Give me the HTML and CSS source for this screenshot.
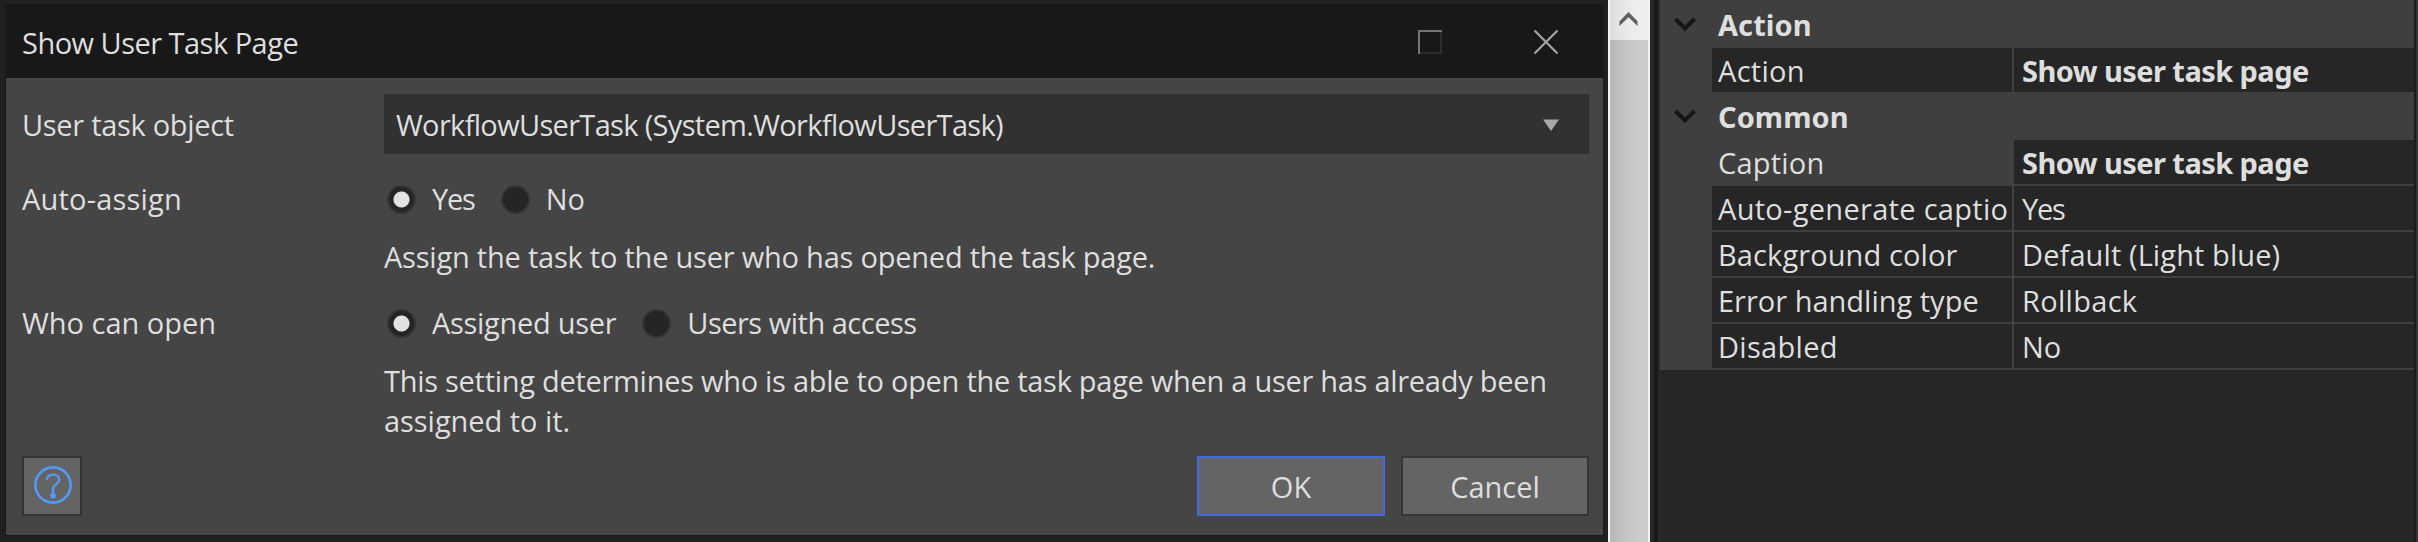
FILE: index.html
```html
<!DOCTYPE html>
<html lang="en">
<head>
<meta charset="utf-8">
<title>Show User Task Page</title>
<link rel="stylesheet" href="styles.css">
</head>
<body>
<main class="workspace">
  <section class="dialog">
    <header class="titlebar">
      <h1 class="title">Show User Task Page</h1>
      <svg class="icon-max" width="24" height="24" viewBox="0 0 24 24"><path d="M23 1V23H1" fill="none" stroke="#2c2c2c" stroke-width="2"/><path d="M1 24V1H24" fill="none" stroke="#757575" stroke-width="2"/></svg>
      <svg class="icon-close" width="24" height="24" viewBox="0 0 24 24"><path d="M0.5 0.5L23.5 23.5M23.5 0.5L0.5 23.5" fill="none" stroke="#a4a4a4" stroke-width="2.2"/></svg>
    </header>
    <div class="body">
      <div class="row row-select">
        <span class="label ls-object">User task object</span>
        <div class="select">
          <span class="ls-value">WorkflowUserTask (System.WorkflowUserTask)</span>
          <svg width="16" height="12" viewBox="0 0 16 12"><path d="M0 0.5H16L8 12Z" fill="#a8a8a8"/></svg>
        </div>
      </div>
      <div class="row row-assign">
        <span class="label ls-auto">Auto-assign</span>
        <div class="radios">
          <span class="radio checked"></span><span class="option ls-yes">Yes</span>
          <span class="radio"></span><span class="option">No</span>
        </div>
      </div>
      <p class="hint ls-assign">Assign the task to the user who has opened the task page.</p>
      <div class="row row-open">
        <span class="label">Who can open</span>
        <div class="radios">
          <span class="radio checked"></span><span class="option ls-assigned">Assigned user</span>
          <span class="radio"></span><span class="option ls-users">Users with access</span>
        </div>
      </div>
      <p class="hint ls-setting">This setting determines who is able to open the task page when a user has already been<br><span class="ls-tail">assigned to it.</span></p>
      <footer class="buttons">
        <button class="btn help" aria-label="Help">
          <svg width="40" height="40" viewBox="0 0 40 40" fill="none" stroke="#5599f7"><circle cx="20" cy="20" r="17.6" stroke-width="2.6"/><path d="M13.8 14.8C14.2 11 17 9.6 20 9.6C23.8 9.6 26.3 11.8 26.3 14.8C26.3 19 20 19.4 20 23.5V28" stroke-width="2.4"/><circle cx="20" cy="30.8" r="2.8" fill="#5599f7" stroke="none"/></svg>
        </button>
        <button class="btn ok">OK</button>
        <button class="btn">Cancel</button>
      </footer>
    </div>
  </section>
  <div class="scrollbar">
    <div class="scroll-up"><svg width="19" height="15" viewBox="0 0 19 15"><path d="M0.5 9.2L9.5 0L18.5 9.2V14L9.5 5.2L0.5 14Z" fill="#606060"/></svg></div>
    <div class="thumb"></div>
  </div>
  <div class="gutter"></div>
  <aside class="props">
    <div class="category"><svg width="22" height="15" viewBox="0 0 22 15"><path d="M1.5 2L11 11.5L20.5 2" fill="none" stroke="#161616" stroke-width="4"/></svg><b class="ls-heading">Action</b></div>
    <div class="prop last"><span class="name ls-action">Action</span><b class="value">Show user task page</b></div>
    <div class="category"><svg width="22" height="15" viewBox="0 0 22 15"><path d="M1.5 2L11 11.5L20.5 2" fill="none" stroke="#161616" stroke-width="4"/></svg><b class="ls-heading">Common</b></div>
    <div class="prop"><span class="name active ls-caption">Caption</span><b class="value">Show user task page</b></div>
    <div class="prop"><span class="name ls-wide">Auto-generate captio</span><span class="value ls-yes">Yes</span></div>
    <div class="prop"><span class="name ls-bg">Background color</span><span class="value ls-bg">Default (Light blue)</span></div>
    <div class="prop"><span class="name">Error handling type</span><span class="value ls-wide">Rollback</span></div>
    <div class="prop"><span class="name ls-wide">Disabled</span><span class="value">No</span></div>
  </aside>
  <div class="edge"></div>
</main>
</body>
</html>
```
FILE: styles.css
```css
* { box-sizing: border-box; }
body {
  margin: 0;
  background: #262626;
  color: #dedede;
  font: 29px/40px "Open Sans", "Noto Sans", sans-serif;
}
svg { display: block; flex: none; }
.workspace { display: flex; width: 2418px; height: 542px; overflow: hidden; }

/* Dialog */
.dialog {
  width: 1608px;
  padding: 4px 4px 7px 5px;
  background: #202020;
}
.titlebar {
  display: flex;
  align-items: center;
  height: 74px;
  padding: 0 46px 0 17px;
  background: #181818;
}
.title {
  flex: 1;
  margin: 0;
  padding-top: 4px;
  font-size: 29px;
  font-weight: 400;
  letter-spacing: -0.52px;
}
.icon-max, .icon-close { margin-top: 2px; }
.icon-max { margin-right: 92px; }
.body {
  height: 457px;
  margin: 0 1px;
  padding: 16px 14px 0 16px;
  background: #454545;
  box-shadow: 0 0 0 1px #191919;
}
.row { display: flex; }
.label { width: 362px; }
.row-select { align-items: center; height: 60px; }
.row-select .label { padding-top: 2px; }
.select {
  display: flex;
  flex: 1;
  align-items: center;
  justify-content: space-between;
  height: 60px;
  padding: 2px 30px 0 12px;
  background: #313131;
}
.row-assign { margin-top: 25px; }
.row-open { margin-top: 26px; }
.radios { display: flex; align-items: center; padding-left: 3px; }
.radio {
  width: 29px;
  height: 29px;
  margin-right: 16px;
  border: 2px solid #353535;
  border-radius: 50%;
  background: #252525;
}
.radio.checked { background: radial-gradient(circle, #e2e2e2 7.5px, #252525 8.5px); }
.option { margin-right: 26px; }
.hint { margin: 18px 0 0 362px; white-space: nowrap; }
.buttons { display: flex; margin-top: 15px; }
.btn {
  width: 188px;
  height: 60px;
  margin-left: 16px;
  padding: 2px 0 0;
  border: 2px solid #353535;
  background: #646464;
  color: inherit;
  font: inherit;
}
.btn.ok { margin-left: auto; border-color: #4169e1; }
.btn.help {
  display: flex;
  width: 60px;
  margin: 0;
  padding: 7px 0 0 9px;
}

/* Canvas scrollbar */
.scrollbar {
  display: flex;
  flex-direction: column;
  width: 42px;
  padding: 0 2px;
  background: #f4f4f4;
}
.scroll-up {
  display: flex;
  height: 40px;
  padding: 12px 0 0 9px;
  background: linear-gradient(90deg, #dedede, #eeeeee 60%);
}
.thumb { flex: 1; background: linear-gradient(90deg, #b8b8b8, #cbcbcb 65%); }
.gutter {
  width: 10px;
  background: linear-gradient(90deg, #282828 4px, #191919 4px 8px, #292929 8px);
}

/* Property grid */
.props { width: 754px; }
.category {
  display: flex;
  height: 48px;
  padding: 5px 0 0 14px;
  background: #3f3f3f;
}
.category svg { margin: 12px 22px 0 0; }
b { font-family: "Noto Sans", sans-serif; font-weight: 700; letter-spacing: -0.56px; }
.prop {
  display: flex;
  height: 46px;
  padding-left: 52px;
  background: #3f3f3f;
}
.prop.last { height: 44px; }
.name, .value {
  height: 44px;
  padding: 3px 0 0 6px;
  background: #262626;
}
.name { width: 300px; margin-right: 2px; white-space: nowrap; }
.name.active { background: #3f3f3f; }
.value { flex: 1; padding-left: 8px; }
.edge { width: 4px; background: linear-gradient(90deg, #1c1c1c 2px, #343434 2px); }

/* Tracking adjustments */
.ls-object { letter-spacing: -0.3px; }
.ls-value { letter-spacing: -0.67px; }
.ls-auto { letter-spacing: 0.2px; }
.ls-yes { letter-spacing: -1.2px; }
.ls-assign { letter-spacing: -0.22px; }
.ls-assigned { letter-spacing: -0.3px; }
.ls-users { letter-spacing: -0.49px; }
.ls-setting { letter-spacing: -0.28px; }
.ls-tail { letter-spacing: -0.05px; }
.ls-heading { letter-spacing: 0.05px; }
.ls-action { letter-spacing: 0.3px; }
.ls-caption { letter-spacing: 0.2px; }
.ls-bg { letter-spacing: 0.1px; }
.ls-wide { letter-spacing: 0.3px; }
```
